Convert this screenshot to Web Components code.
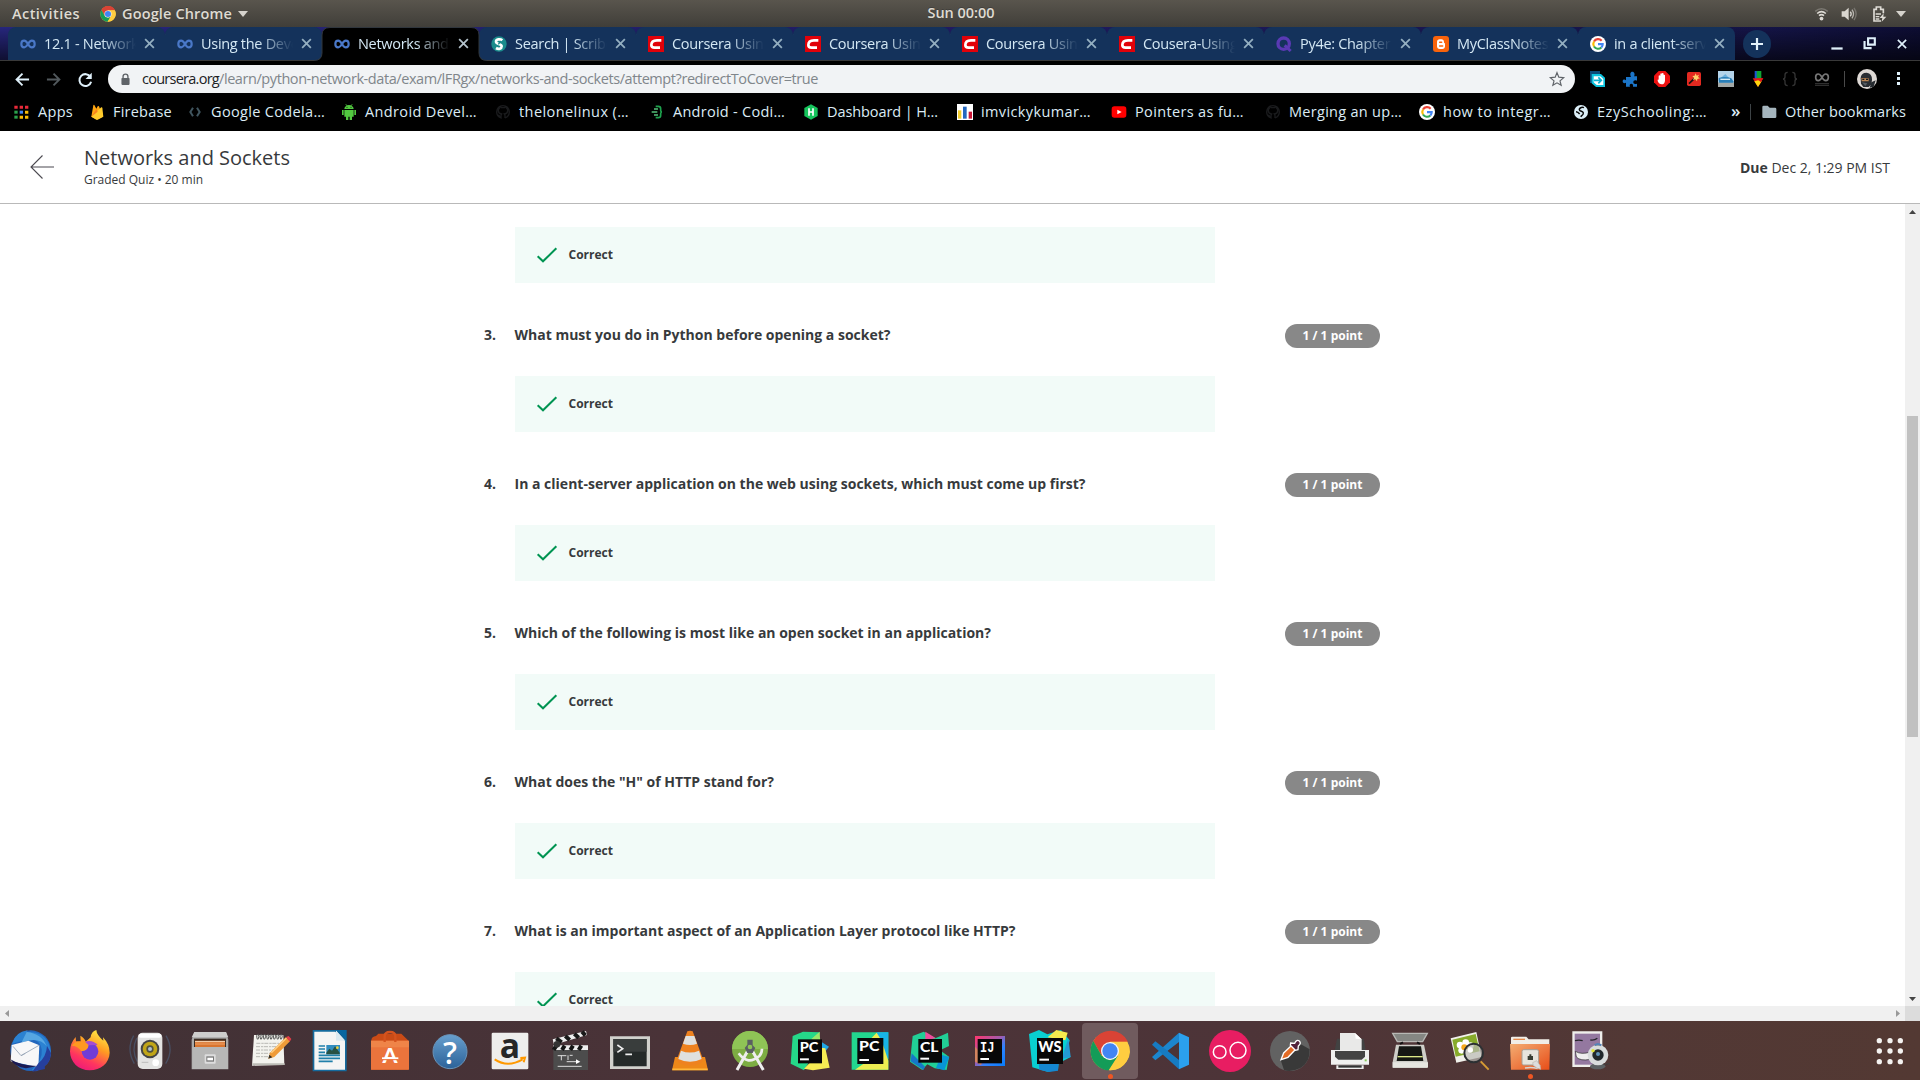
<!DOCTYPE html>
<html lang="en">
<head>
<meta charset="utf-8">
<title>Networks and Sockets</title>
<style>
html,body{margin:0;height:100%;overflow:hidden;background:#fff}
body{font-family:"Open Sans","Noto Sans",sans-serif}
</style>
</head>
<body>
<desk-screen></desk-screen>
<script>
const svg=(vb,body)=>`<svg viewBox="${vb}" xmlns="http://www.w3.org/2000/svg">${body}</svg>`;
const chrome=(s,c,r)=>`<g transform="translate(${c} ${s}) scale(${r/58})"><circle r="58" fill="#fbc93a"/><path d="M-50-29A58 58 0 0 1 54-28L0-28-25-14Z" fill="#d94335"/><path d="M0-28H51A58 58 0 0 0-50-29L-25 14Z" fill="#d94335"/><path d="M-50-30L-25 14 0 28 24 14-4 58A58 58 0 0 1-50-30Z" fill="#149c58"/><path d="M0-28H52A58 58 0 0 1-2 58L25 14Z" fill="#ffcd40"/><circle r="27" fill="#f4f6f8"/><circle r="23" fill="#4285f4"/></g>`;
const G=`<circle cx="24" cy="24" r="24" fill="#fff"/><g fill="none" stroke-width="6.5"><path d="M35 14A14.500 14.500 0 0 0 12 16.500" stroke="#ea4335"/><path d="M12 16.500A14.500 14.500 0 0 0 12 31.500" stroke="#fbbc05"/><path d="M12 31.500A14.500 14.500 0 0 0 34 34.500" stroke="#34a853"/><path d="M34 34.500A14.500 14.500 0 0 0 38 24.500H24" stroke="#4285f4"/></g>`;
const cat=`<path d="M24 5C13 5 5 13 5 24c0 9 5 15 13 18l0-6c-5 1-7-1-8-4M30 42v-7c0-3-1-4-2-5 7-1 10-4 10-10 0-3-1-5-3-7 1-2 0-4 0-5-3 0-5 2-6 3h-10c-2-1-4-3-6-3-1 2-1 4 0 5-2 2-3 4-3 7 0 6 4 9 10 10l-2 4M30 42c8-3 13-9 13-18C43 13 35 5 24 5" fill="none" stroke="#1a1b1d" stroke-width="4"/>`;
const box=(x,y,s,t,fs=38)=>`<rect x="${x}" y="${y}" width="${s}" height="${s}" fill="#080808"/><text x="${x+5}" y="${y+38}" font-family="Lato" font-weight="900" font-size="${fs}" fill="#fff" textLength="${s*.78}" lengthAdjust="spacingAndGlyphs">${t}</text><rect x="${x+6}" y="${y+s-15}" width="${s*.37}" height="6" fill="#fff"/>`;
const D=b=>svg('0 63 180 177',b);
const ICONS={
inf:svg('0 0 48 48','<path d="M24 24C20 17 17 14 12.500 14 7 14 4 18 4 24s3 10 8.500 10c4 0 7-3 11.500-10 4-7 7-10 11.500-10C41 14 44 18 44 24s-3 10-8.500 10C31 34 28 31 24 24" fill="none" stroke="#4a78c8" stroke-width="6.500"/>'),
scribd:svg('0 0 48 48','<circle cx="24" cy="24" r="23" fill="#1b8b8c"/><path d="M34 13C28 8 15 9 15 17c0 8 17 6 17 14 0 7-9 10-17 5" fill="none" stroke="#fff" stroke-width="8"/><path d="M30 15l-8 10" stroke="#1b8b8c" stroke-width="4"/>'),
chegg:svg('0 0 48 48','<path d="M0 0H48V48H0Z" fill="#e10109"/><path d="M40 13H27C16 13 10 19 10 27c0 6 4 8 10 8H36" fill="none" stroke="#fff" stroke-width="8"/>'),
quora:svg('0 0 48 48','<circle cx="23" cy="23" r="17" fill="none" stroke="#5a3ab4" stroke-width="10"/><path d="M26 28L44 45" stroke="#5a3ab4" stroke-width="9"/>'),
blogger:svg('0 0 48 48','<rect width="48" height="48" rx="9" fill="#f9630b"/><path d="M12 18c0-5 3-8 8-8h5c5 0 8 3 8 8 0 3 1 4 3 4v9c0 5-3 8-8 8H20c-5 0-8-3-8-8Z" fill="#fff"/><path d="M20 19h6M20 30h9" stroke="#f9630b" stroke-width="4.500" stroke-linecap="round"/>'),
g:svg('0 0 48 48',G),
apps:svg('0 0 48 48','<path d="M1 5h10v9H1zM17 5h10v9H17zM33 5h10v9H33z" fill="#e92a3a"/><path d="M1 20h10v9H1z" fill="#2ba24c"/><path d="M17 20h10v9H17z" fill="#4285f4"/><path d="M33 20h10v9H33zM17 35h10v9H17zM33 35h10v9H33z" fill="#fbbc05"/><path d="M1 35h10v9H1z" fill="#2ba24c"/>'),
fire:svg('0 0 48 48','<path d="M7 38L13 4q1-3 3-1l6 11 4-7q2-2 4 0L41 38 26 46q-2 1-4 0Z" fill="#ffa611"/><path d="M7 38L31 15l6-5q2-1 3 1l3 27-17 9q-2 1-4 0Z" fill="#ffcb2c"/><path d="M7 38L22 15l4 8Z" fill="#f58220"/>'),
code:svg('0 0 48 48','<path d="M18 11L10 24l8 13M30 11l8 13-8 13" fill="none" stroke="#40555f" stroke-width="6"/>'),
droid:svg('0 0 48 48','<path d="M10 15a14 12 0 0 1 28 0ZM10 18h28v20H10zM3 18h5v15H3zM40 18h5v15h-5zM15 37h7v11h-7zM26 37h7v11h-7z" fill="#52c940"/><path d="M14 0l4 6M34 0l-4 6" stroke="#52c940" stroke-width="2"/><circle cx="18" cy="10" r="1.500"/><circle cx="30" cy="10" r="1.500"/>'),
cat:svg('0 0 48 48',cat),
brace:svg('0 0 48 48','<path d="M20 7h8q7 0 7 7v5q0 5 4 5-4 0-4 5v5q0 7-7 7H20" fill="none" stroke="#1da24d" stroke-width="5"/><path d="M8 24h17M15 15h12M15 33h12" stroke="#54c17a" stroke-width="4"/>'),
hr:svg('0 0 48 48','<path d="M24 1L44 12V36L24 47 4 36V12Z" fill="#15c35b"/><path d="M18 13v22M30 13v22M18 24h12" stroke="#fff" stroke-width="5" fill="none"/>'),
bars:svg('0 0 48 48','<path d="M0 0h48v48H0z" fill="#fff"/><path d="M3 19h10v25H3z" fill="#f3cd2b"/><path d="M18 8h11v36H18z" fill="#2467be"/><path d="M35 23h10v21H35z" fill="#cc1736"/>'),
yt:svg('0 0 48 48','<rect x="2" y="7" width="44" height="34" rx="8" fill="#f00"/><path d="M19 17l13 7-13 7Z" fill="#fff"/>'),
globe:svg('0 0 48 48','<circle cx="24" cy="24" r="21" fill="#dceff8"/><path d="M33 11C25 8 16 14 20 19c3 4 10 2 11 8 1 5-5 8-8 11M9 23c5 0 8 3 11 7" fill="none" stroke="#070707" stroke-width="4.500"/>'),
folder:svg('0 0 48 48','<path d="M4 9q0-4 4-4h12l6 6h16q4 0 4 4v24q0 3-4 3H7q-3 0-3-3Z" fill="#a5b5bd"/>'),
x:svg('0 0 48 48','<path d="M13 13L35 35M35 13L13 35" stroke="currentColor" stroke-width="4.500"/>'),
back:svg('0 0 48 48','<path d="M45 24H6M24 5L5 24l19 19" fill="none" stroke="#dff0fa" stroke-width="6"/>'),
fwd:svg('0 0 48 48','<path d="M3 24h39M24 5l19 19-19 19" fill="none" stroke="#52595d" stroke-width="6"/>'),
reload:svg('0 0 48 48','<path d="M40 16A19 19 0 1 0 42 31" fill="none" stroke="#dff0fa" stroke-width="6.500"/><path d="M44 2v20H24Z" fill="#dff0fa"/>'),
lock:svg('0 0 48 48','<rect x="9" y="18" width="30" height="26" rx="3" fill="#5f6368"/><path d="M15 19v-6a9 9 0 0 1 18 0v6" fill="none" stroke="#5f6368" stroke-width="5"/>'),
star:svg('0 0 48 48','<path d="M24 5l5.500 13.500L44 20 33 29.500 36.500 43 24 35.500 11.500 43 15 29.500 4 20l14.500-1.500Z" fill="none" stroke="#5f6368" stroke-width="3.500"/>'),
e1:svg('0 0 48 48','<path d="M0 0H30V36H0z" fill="#0a4a78"/><path d="M5 9H33L45 20V48H18L5 37Z" fill="#0bc3de"/><path d="M11 16h20l9 8v18H20l-9-8Z" fill="#fff"/><path d="M12 28h20M25 19l9 9-9 9" fill="none" stroke="#0bb2d4" stroke-width="5"/>'),
e2:svg('0 0 48 48','<path d="M18 18h9c-4-9-2-16 4-16s9 8 5 14h9v13c-8-3-11 0-11 5s5 6 11 4v9H33c1-6-1-9-5-9-5 0-6 4-4 9H12V35c-6 3-10 1-10-4s5-7 10-3V18Z" fill="#1b75c8"/>'),
e3:svg('0 0 48 48','<path d="M14 0H34L48 14V34L34 48H14L0 34V14Z" fill="#ed1111"/><path d="M14 25V14q3-3 5 0V8q3-3 5 0V7q3-2 5 1v4q3-2 4 1v16q-1 11-10 11-8 0-12-10-1-5 3-4Z" fill="#fff"/>'),
e4:svg('0 0 48 48','<rect x="3" y="3" width="42" height="42" rx="5" fill="#e32920"/><path d="M9 38L28 20" stroke="#111" stroke-width="5"/><path d="M29 7l3 7 7-3-3 7 6 4-8 2-1 7-5-6-7 2 3-7-5-5 7-1Z" fill="#ffd06a"/>'),
e5:svg('0 0 48 48','<path d="M0 0H48V48H0z" fill="#b4d4ea"/><path d="M0 28L22 9 36 25Z" fill="#6bb0dc"/><path d="M0 34H48V48H0z" fill="#a4a9a7"/><path d="M2 21q20-7 38 1l6 9v4H3z" fill="#2a7fb8"/><path d="M7 25h29" stroke="#d8edf7" stroke-width="4"/>'),
e6:svg('0 0 48 48','<path d="M14 0h10v24H14z" fill="#1c52d8"/><path d="M20 0h14v24H20z" fill="#10a533"/><path d="M8 22h32L24 48Z" fill="#e31819"/><path d="M24 28L35 31 24 48 13 31Z" fill="#ffd50d"/><path d="M24 22h16l-9 12Z" fill="#e31819"/>'),
e7:svg('0 0 48 48','<path d="M17 4q-8 0-8 7v6q0 7-6 7 6 0 6 7v6q0 7 8 7M31 4q8 0 8 7v6q0 7 6 7-6 0-6 7v6q0 7-8 7" fill="none" stroke="#343434" stroke-width="4"/>'),
e8:svg('0 0 48 48','<path d="M24 19C20 12 17 9 12.500 9 8 9 5 13 5 19s3 10 8 10c4 0 7-3 11-10 4-7 7-10 11-10 5 0 8 4 8 10s-3 10-8 10C31 29 28 26 24 19" fill="none" stroke="#777" stroke-width="5"/><path d="M3 38h42M3 43h42" stroke="#555" stroke-width="2"/>'),
ninja:svg('0 0 60 60','<circle cx="30" cy="30" r="30" fill="#ded9d5"/><path d="M11 28Q11 11 29 11q17 2 16 22l-2 13L35 54H19L12 44Z" fill="#292d32"/><path d="M13 27l22 1v9H14Z" fill="#bc8552"/><path d="M16 31h6M27 31h6" stroke="#16191c" stroke-width="4"/><path d="M15 40l16 3-6 8Z" fill="#555c63"/><path d="M43 40l13-6-6 19-12 3Z" fill="#252a2f"/>'),
chromeS:svg('0 0 48 48',chrome(24,24,23)),
wifi:svg('0 0 48 48','<g fill="none" stroke-width="5"><path d="M4 17q20-16 40 0" stroke="#7b7871"/><path d="M10 24q14-12 28 0M16 31q8-7 16 0" stroke="#dedbd5"/></g><circle cx="24" cy="40" r="6" fill="#dedbd5"/>'),
vol:svg('0 0 48 48','<path d="M2 16h9L23 5v38L11 32H2Z" fill="#d9d6d0"/><path d="M28 17q5 7 0 14" fill="none" stroke="#d9d6d0" stroke-width="4"/><path d="M33 11q9 13 0 26" fill="none" stroke="#b5b2ac" stroke-width="4"/><path d="M39 6q13 18 0 36" fill="none" stroke="#77746e" stroke-width="4"/>'),
bat:svg('0 0 48 48','<path d="M30 45H9V10h7V3h13v7h8v12" fill="none" stroke="#dedbd5" stroke-width="5"/><path d="M14 24h16M14 32h11M14 39h11" stroke="#dedbd5" stroke-width="4"/><path d="M38 22L26 36h8l-2 11 14-15h-9Z" fill="#dedbd5"/>'),
min:svg('0 0 48 48','<path d="M9 36H39" stroke="#dff0fa" stroke-width="6"/>'),
max:svg('0 0 48 48','<path d="M20 9h19v18H20z" fill="none" stroke="#dff0fa" stroke-width="6"/><path d="M26 15h7v6h-7z" fill="#0b0b30"/><path d="M10 17v20h20" fill="none" stroke="#dff0fa" stroke-width="6"/>'),
arrow:svg('0 0 24 24','<path d="M24 12H1M12.500 .5L1 12 12.500 23.500" fill="none" stroke="#4b4950" stroke-width="1.100"/>'),
check:svg('0 0 60 48','<path d="M2 28L18 43 58 4" fill="none" stroke="#009452" stroke-width="6"/>'),
grid:D('<g fill="#f5f3f1">'+[58,90,121].map(x=>[122,153,185].map(y=>`<circle cx="${x}" cy="${y}" r="8"/>`).join('')).join('')+'</g>'),
tb:D('<circle cx="92" cy="152" r="61" fill="#2166bd"/><path d="M37 131Q45 96 83 91L80 96q58-3 70 47 12 48-42 71l-13-4q34-27 30-62-6-43-62-24Z" fill="#2b82d2"/><path d="M80 96q45 4 60 43-24-32-76-11Z" fill="#56a6e2"/><path d="M35 135l50-13 33 14-3 66L32 184Z" fill="#f7f7f8"/><path d="M39 139l24 28 54-31M63 167l13-7" fill="none" stroke="#94a2b4" stroke-width="2.500"/><path d="M31 178q32 20 82 20l-35 7Q45 201 31 178Z" fill="#1b1a52"/><path d="M115 190q24-19 26-52l12 21q-2 31-19 39l1 9-38 8Z" fill="#263f9d"/>'),
ff:D('<linearGradient id="f" x1=".8" y1="0" x2=".3" y2="1"><stop stop-color="#fff34a"/><stop offset=".4" stop-color="#ff9b22"/><stop offset=".75" stop-color="#ff355f"/><stop offset="1" stop-color="#ed1a7a"/></linearGradient><path d="M92 112Q94 94 109 90q1 15 21 32l-1-10q20 21 20 46c-1 31-27 53-60 53s-59-24-59-57q0-24 17-43l1 13 14 1-1-18q13 7 16 18Z" fill="url(#f)"/><circle cx="90" cy="154" r="25" fill="#703cd6"/><path d="M35 137q14-19 37-11 15-7 34 8l-20 1q-2 17-22 19-10-17-29-17Z" fill="#ff9920"/><path d="M75 125q22-7 38 10l-27 1Z" fill="#a34dd0"/>'),
spk:D('<g fill="none" stroke="#4b5d79" stroke-width="4" opacity=".65"><path d="M41 107Q18 148 43 191M138 107q25 43-1 84M50 115q-17 35 2 70"/></g><rect x="53" y="98" width="74" height="109" rx="15" fill="#e3e3e2"/><rect x="56" y="101" width="68" height="12" rx="6" fill="#fff"/><circle cx="90" cy="147" r="28" fill="#454545"/><circle cx="90" cy="147" r="22" fill="#c0a517"/><circle cx="90" cy="147" r="11" fill="#4f513f"/><circle cx="90" cy="147" r="6" fill="#aec0d1"/><circle cx="107" cy="188" r="10" fill="#fff"/><path d="M65 187h20" stroke="#bbb" stroke-width="3"/>'),
files:D('<path d="M43 96H138L145 119V208H35V119Z" fill="#a9a9a8"/><path d="M43 96h95l7 16H35Z" fill="#cececd"/><path d="M42 116h96v27H42z" fill="#3b2d24"/><path d="M45 122h90v22H45z" fill="#d9742e"/><path d="M45 125h90" stroke="#f6ddbf" stroke-width="3"/><path d="M45 132h90" stroke="#f0a368" stroke-width="3"/><path d="M37 141h107v66H37z" fill="#b7b7b6"/><rect x="74" y="163" width="33" height="28" rx="3" fill="#ddd"/><path d="M79 169h23v16H79z" fill="#777"/><path d="M82 173h17v8H82z" fill="#fff"/>'),
edit:D('<path d="M42 105H130L133 195 36 197Z" fill="#f3f3ee"/><path d="M37 190h97v5H37z" fill="#bdbdb6"/><g stroke="#555" stroke-width="3">'+[52,62,72,82,92,102,112,122].map(x=>`<path d="M${x} 118q-5-15 3-15 4 6-1 15" fill="none"/>`).join('')+'</g><g stroke="#9c9c97" stroke-width="2" stroke-dasharray="12 3 7 2"><path d="M49 130h68M48 140h60M48 150h52M48 160h45M48 170h40"/></g><path d="M85 176l5-18 48-47 12 13-47 47Z" fill="#ef9b38"/><path d="M138 111l8-3 8 9-5 8Z" fill="#e43d49"/><path d="M85 176l3-12 9 8Z" fill="#343029"/><path d="M94 158l45-43" stroke="#ffcf83" stroke-width="4"/>'),
doc:D('<path d="M38 90h70l32 32v92H38Z" fill="#156b9e"/><path d="M43 95h63l29 29v85H43Z" fill="#f5f5f4"/><path d="M108 90v32h28" fill="#dceaf1"/><path d="M107 90h33v33Z" fill="#0766a0"/><g stroke="#2180aa" stroke-width="5"><path d="M56 138h19M56 147h19M56 157h19M56 166h64M56 175h64M56 184h42"/></g><path d="M79 135h41v28H79z" fill="#328dbf"/><path d="M79 158l9-12 8 6 9-13 14 19v5H79Z" fill="#285144"/><circle cx="112" cy="143" r="4" fill="#efd33a"/>'),
shop:D('<path d="M34 121q1-12 14-13l7-7h69l20 20v88H34Z" fill="#ca4b16"/><path d="M33 122h114v87H33z" fill="#eb743c"/><path d="M33 122h114v20H33z" fill="#ef8448"/><path d="M74 126V109q0-13 16-13t16 13v17" fill="none" stroke="#d5531e" stroke-width="7"/><text x="90" y="190" text-anchor="middle" font-family="Lato" font-weight="900" font-size="64" fill="#fff">A</text><path d="M66 175h49" stroke="#fff" stroke-width="6"/><path d="M66 179h49" stroke="#eb743c" stroke-width="3"/>'),
help:D('<linearGradient id="h" x2="0" y2="1"><stop stop-color="#679fcd"/><stop offset="1" stop-color="#2c6299"/></linearGradient><circle cx="90" cy="155" r="51" fill="url(#h)" stroke="#6993b8" stroke-width="3"/><text x="90" y="191" text-anchor="middle" font-family="Open Sans" font-weight="600" font-size="92" fill="#fff">?</text>'),
amz:D('<rect x="35" y="98" width="110" height="110" rx="4" fill="#eeeeed"/><text x="90" y="174" text-anchor="middle" font-family="Open Sans" font-weight="bold" font-size="101" fill="#272727">a</text><path d="M44 178Q83 204 128 178M121 174l14-1-4 14" fill="none" stroke="#ff9900" stroke-width="6"/>'),
clap:D('<path d="M40 138h104v72H40z" fill="#4c4c4c"/><path d="M38 118l100-25 3 12L42 134Z" fill="#eee"/><path d="M49 115l16 12M76 108l13 12M103 101l13 12M126 95l10 11" stroke="#191919" stroke-width="12"/><path d="M40 136h104v14H40z" fill="#eee"/><path d="M49 137l-8 13M74 137l-8 13M99 137l-8 13M124 137l-8 13" stroke="#151515" stroke-width="12"/><circle cx="51" cy="133" r="10" fill="#333"/><path d="M53 167h26M64 167v14M84 166v14M89 166h9M80 185h31M53 199h72" stroke="#ddd" stroke-width="3"/><path d="M108 178l13 7-13 7Z" fill="#fff"/>'),
term:D('<path d="M30 109h120v98H30z" fill="#d1d1cc"/><path d="M40 117h100v82H40z" fill="#252a29"/><path d="M40 117h100v38H40z" fill="#393d3c"/><path d="M52 135l16 11-16 11M76 163h20" fill="none" stroke="#eee" stroke-width="5"/>'),
vlc:D('<path d="M45 171h90l9 40H36Z" fill="#ed8819"/><path d="M82 94q8-4 16 0l32 86q-8 17-40 17t-40-17Z" fill="#ee821f"/><path d="M77 108h26l8 23q-20 8-42 0ZM63 152q27 11 54 0l8 25q-35 17-70 0Z" fill="#dfe0de"/><path d="M37 208h106" stroke="#ffb83b" stroke-width="5"/>'),
as:D('<circle cx="90" cy="147" r="54" fill="#7dad43"/><path d="M36 147a54 54 0 0 1 108 0Z" fill="#8fc456"/><path d="M88 144L51 210M92 144l38 66" stroke="#eee" stroke-width="9"/><path d="M56 160q27 38 62 8 8-8 8-22" fill="none" stroke="#eee" stroke-width="8"/><path d="M82 119h16v17l8 8-8 15H82l-8-15 8-10Z" fill="#5a6062"/><circle cx="90" cy="141" r="7" fill="#8fc456"/>'),
pc1:D('<path d="M38 108l31-13 50 2-10 54-37 60-40-20Z" fill="#25d889"/><path d="M119 95l2 38-27-16Z" fill="#9ce769"/><path d="M120 123l27 17-20 25Z" fill="#20a7e5"/><path d="M123 143l13 2 13 58-50 8-27-5 20-20Z" fill="#f7ed53"/>'+box(54,118,72,'PC')),
pc2:D('<path d="M35 97h110v112H35Z" fill="#22d78f"/><path d="M110 97h35v80l-25-24Z" fill="#18b4e6"/><path d="M91 118l19-20 15 24 20 60v27H45l34-24Z" fill="#eeee51"/>'+box(52,114,78,'PC',41)),
cl:D('<path d="M38 108l33-13 35 20 38-17 3 40-27 13 27 19-7 40-36-5-22-12-15 17-37-25Z" fill="#21cf96"/><path d="M76 95l31 19-31 8Z" fill="#ef4c9c"/><path d="M35 160l40 40-4 10-39-26Z" fill="#1677c8"/><path d="M124 164l24 7-15 40-25-7Z" fill="#0795d5"/>'+box(55,117,71,'CL')),
ij:D('<linearGradient id="i" x2="1" y2="1"><stop stop-color="#ff356c"/><stop offset=".45" stop-color="#a05cae"/><stop offset=".65" stop-color="#2f83ff"/><stop offset="1" stop-color="#087cfa"/></linearGradient><path d="M45 108h90v90H45Z" fill="url(#i)"/><path d="M45 140l28 30-10 25-18-10Z" fill="#d3845f"/><rect x="53" y="117" width="73" height="73" fill="#080808"/><text x="60" y="157" font-family="Liberation Mono" font-weight="bold" font-size="46" fill="#fff" textLength="43" lengthAdjust="spacingAndGlyphs">IJ</text><path d="M61 174h26v6H61z" fill="#fff"/>'),
ws:D('<path d="M27 102l30-12 25 13 41-13 26 31-8 31 11 19-36 19-2 20-32 5-45-13Z" fill="#09cfd1"/><path d="M83 112l26-22 34 8-7 23Z" fill="#f5ec4e"/><path d="M145 115l7 56-27 6Z" fill="#239ad4"/><path d="M56 184h60l-2 28-27 4-29-7Z" fill="#1588d1"/><rect x="51" y="114" width="78" height="78" fill="#080808"/><text x="55" y="156" font-family="Lato" font-weight="900" font-size="44" fill="#fff" textLength="70" lengthAdjust="spacingAndGlyphs">WS</text><path d="M58 176h29v6H58z" fill="#fff"/>'),
chrome:D(chrome(153,90,58)),
vs:D('<path d="M117 98L36 171l10 10 71-55Z" fill="#1c86ce"/><path d="M46 124L36 134l81 74V179Z" fill="#167bc2"/><path d="M117 98l30 14v82l-30 14Z" fill="#2ba0ed"/><path d="M117 128l-33 25 33 26Z" fill="#4b3538"/>'),
oo:D('<circle cx="90" cy="153" r="63" fill="#e81d62"/><circle cx="59" cy="156" r="19" fill="none" stroke="#fff" stroke-width="4.500"/><circle cx="114" cy="151" r="24" fill="none" stroke="#fff" stroke-width="4.500"/>'),
pick:D('<circle cx="90" cy="153" r="60" fill="#626262"/><path d="M62 180l10 30q20 8 49-6 30-17 28-56l-32-18Z" fill="#393939"/><path d="M63 179l8-20 27-26 12 12-26 27Z" fill="#e36b25" stroke="#fff" stroke-width="4"/><path d="M92 129l12 1q6-13 14-7 7 7-3 15l-1 11-8 2-15-15Z" fill="#52233b" stroke="#fff" stroke-width="4"/>'),
print:D('<path d="M51 116h80l7 40H43Z" fill="#424242"/><path d="M60 99h45l20 19v38H60Z" fill="#e9e9e8"/><path d="M105 99l2 17 18 2Z" fill="#fff"/><path d="M33 150h114v44H33z" fill="#f0f0ef"/><path d="M45 153h90v17l-10 9H55l-10-9Z" fill="#444"/><path d="M49 196h82v11H49z" fill="#eee"/><path d="M55 196h70v7H55z" fill="#333"/><path d="M134 181h6" stroke="#85cb57" stroke-width="6"/>'),
scan:D('<path d="M38 100h104l-14 25H52Z" fill="#858783" stroke="#b7b8b4" stroke-width="4"/><path d="M48 134h84l11 53v17H38v-17Z" fill="#cfcfc9"/><path d="M57 139h66l7 44H50Z" fill="#151814"/><path d="M53 170h75" stroke="#dce987" stroke-width="4"/><path d="M38 187h106v15H38z" fill="#e6e6e0"/><path d="M60 132l9-5M120 132l-9-5" stroke="#111" stroke-width="6"/>'),
imgv:D('<path d="M32 115l77-19 16 75-76 17Z" fill="#f1f1eb"/><path d="M37 119l70-17 12 52-72 16Z" fill="#87ab2a"/><g fill="#fff"><circle cx="60" cy="135" r="10"/><circle cx="77" cy="128" r="10"/><circle cx="91" cy="137" r="10"/><circle cx="65" cy="151" r="10"/><circle cx="80" cy="157" r="10"/></g><circle cx="73" cy="142" r="9" fill="#f5a91d"/><circle cx="101" cy="159" r="28" fill="#b9b9b3" opacity=".7"/><circle cx="101" cy="159" r="28" fill="none" stroke="#2c3033" stroke-width="6"/><path d="M122 184l24 25" stroke="#d69b34" stroke-width="6"/><circle cx="91" cy="150" r="8" fill="#fff"/>'),
fold:D('<path d="M33 113q0-3 4-3h42l7 8h62v20H33Z" fill="#f1eee8"/><path d="M40 118h35" stroke="#e68a4b" stroke-width="4"/><linearGradient id="q" x2="1" y2="1"><stop stop-color="#f3ad72"/><stop offset="1" stop-color="#e84d18"/></linearGradient><path d="M30 132h120l-2 77H33Z" fill="url(#q)"/><rect x="66" y="149" width="50" height="46" rx="5" fill="#e7e4dd" stroke="#a69f96" stroke-width="3"/><path d="M83 178v-10h5v-5h6v5h5v12H83Z" fill="#393d33"/><path d="M75 204q20-4 38 2" fill="none" stroke="#d6d4d0" stroke-width="4"/><path d="M98 188l12-6 10 14 2 12-12-4-10-8Z" fill="#ddd" stroke="#bbb5ae" stroke-width="2"/>'),
cheese:D('<path d="M37 94h90v107H37z" fill="#efeeeb"/><path d="M44 101h76v93H44z" fill="#9478a0"/><path d="M45 122q12-3 23 0M91 120q12 2 21-5" fill="none" stroke="#26252b" stroke-width="4"/><path d="M46 154q18 11 45 2v22q-30 6-42-7Z" fill="#eee" stroke="#222" stroke-width="2"/><ellipse cx="113" cy="199" rx="23" ry="9" fill="#5c6264"/><circle cx="114" cy="165" r="31" fill="#d8dcdc"/><circle cx="114" cy="165" r="17" fill="#20272b"/><circle cx="114" cy="162" r="6" fill="#5e91b7"/><path d="M104 136q9-8 20 0" stroke="#5683b7" stroke-width="6"/><circle cx="99" cy="152" r="5" fill="#dfe337"/><path d="M131 193q9 0 18-2" stroke="#444" stroke-width="3"/>')
};
const def=(name,html,after)=>customElements.define(name,class extends HTMLElement{
  constructor(){super();this.attachShadow({mode:'open'})}
  connectedCallback(){this.shadowRoot.innerHTML=typeof html==='function'?html(this):html;if(after)after(this)}
});
/* Keeps a label at a fixed advance width by spreading the difference over its letters. */
def('fit-text','<style>:host{display:inline-block;white-space:pre}</style><slot></slot>',el=>{
  const w=+el.getAttribute('w');if(!w)return;
  const n=el.textContent.length;
  el.style.letterSpacing=((w-el.getBoundingClientRect().width)/n)+'px';
});
def('ui-icon',e=>`<style>:host{display:block;flex:none;width:var(--w,16px);height:var(--h,16px)}svg{display:block;width:100%;height:100%;overflow:visible}</style>${ICONS[e.getAttribute('name')]}`);
def('system-bar',`<style>:host{display:grid;grid-template-columns:1fr auto 1fr;align-items:center;height:27px;padding:0 14px 0 12px;background:linear-gradient(#59554d,#403e39);color:#dfdbd2;font:600 14.500px "Open Sans";text-shadow:0 -1px #3339}
.l,.r{display:flex;align-items:center}.r{justify-content:flex-end}.t{width:0;height:0;border:5px solid transparent;border-top:6px solid #d6d3cd;border-bottom:0}</style>
<div class="l"><fit-text w="68">Activities</fit-text><ui-icon name="chromeS" style="margin:0 6px 0 20px"></ui-icon><fit-text w="110">Google Chrome</fit-text><i class="t" style="margin-left:6px"></i></div>
<fit-text w="67" style="position:relative;top:-1px;left:2px">Sun 00:00</fit-text>
<div class="r"><ui-icon name="wifi" style="--w:15px;--h:15px"></ui-icon><ui-icon name="vol" style="margin-left:12px"></ui-icon><ui-icon name="bat" style="margin-left:14px;margin-right:-1px"></ui-icon><i class="t" style="margin-left:10px"></i></div>`);
def('browser-tab',e=>`<style>:host{display:flex;align-items:center;box-sizing:border-box;width:157px;height:33px;padding:0 6px 0 12px;background:#14325b;color:#d4e8f4;border-radius:8px 8px 0 0;position:relative;font:14.500px "Open Sans"}
:host([active]){background:none;z-index:2}.bg{position:absolute;left:0;top:0;width:157px;height:34px;overflow:visible}
ui-icon{position:relative}.title{position:relative;width:94px;margin-left:8px;margin-right:4px;overflow:hidden;white-space:nowrap;letter-spacing:-.3px;-webkit-mask:linear-gradient(90deg,#000 62%,transparent 100%)}
.x{color:#94afc1}:host([active]) .x{color:#b4c3cc}:host([sep])::after{content:"";position:absolute;right:-1px;top:7px;width:1px;height:20px;background:#50677f}</style>
${e.hasAttribute('active')?'<svg class="bg" viewBox="0 0 157 34"><path d="M-8 33.500Q0 33.500 0 26V8Q0 .5 8 .5H149Q157 .5 157 8V26Q157 33.500 165 33.500V35H-8Z" fill="#000"/><path d="M-8 33.500Q0 33.500 0 26V8Q0 .5 8 .5H149Q157 .5 157 8V26Q157 33.500 165 33.500" fill="none" stroke="#30363d"/></svg>':''}
<ui-icon name="${e.getAttribute('icon')}"></ui-icon><div class="title"><slot></slot></div><ui-icon class="x" name="x" style="--w:19px;--h:19px"></ui-icon>`);
def('tab-strip',`<style>:host{display:flex;height:33px;padding-left:8px;border-bottom:1px solid #393939;background:linear-gradient(180deg,transparent,#0009),linear-gradient(90deg,#26267c,#201b62 50%,#141446 92%,#0d0d32)}
.plus{width:28px;height:28px;border-radius:50%;background:#14325b;margin:3px 0 0 8px;display:grid;place-items:center}.plus svg{width:14px}.win{margin-left:auto;display:flex;align-items:center;gap:15px;padding-right:9px;color:#dff0fa}</style>
<browser-tab icon="inf" sep>12.1 - Networks</browser-tab><browser-tab icon="inf">Using the Devel</browser-tab><browser-tab icon="inf" active>Networks and S</browser-tab><browser-tab icon="scribd" sep>Search | Scribd</browser-tab><browser-tab icon="chegg" sep>Coursera Using</browser-tab><browser-tab icon="chegg" sep>Coursera Using</browser-tab><browser-tab icon="chegg" sep>Coursera Using</browser-tab><browser-tab icon="chegg" sep>Cousera-Using</browser-tab><browser-tab icon="quora" sep>Py4e: Chapter</browser-tab><browser-tab icon="blogger" sep>MyClassNotes</browser-tab><browser-tab icon="g">in a client-serv</browser-tab>
<div class="plus"><svg viewBox="0 0 14 14"><path d="M7 1v12M1 7h12" stroke="#e4f3fb" stroke-width="2.200"/></svg></div>
<div class="win"><ui-icon name="min" style="--w:18px;--h:18px"></ui-icon><ui-icon name="max" style="--w:17px;--h:17px"></ui-icon><ui-icon name="x" style="--w:18px;--h:18px"></ui-icon></div>`);
def('tool-bar',`<style>:host{display:flex;align-items:center;height:36px;padding:0 15px;background:#000;box-sizing:border-box}
.omni{display:flex;align-items:center;box-sizing:border-box;width:1467px;height:28px;margin-left:15px;border-radius:14px;background:#f1f3f5;padding:0 10px 0 11px;font:14.500px "Open Sans";color:#80868b}.omni fit-text{margin-top:-2px}.ext{display:flex;align-items:center;gap:16px;margin-left:15px}</style>
<ui-icon name="back" style="--w:15px;--h:15px"></ui-icon><ui-icon name="fwd" style="--w:15px;--h:15px;margin-left:16px"></ui-icon><ui-icon name="reload" style="--w:15px;--h:15px;margin-left:17px"></ui-icon>
<div class="omni"><ui-icon name="lock" style="--w:13px;--h:13px"></ui-icon><fit-text w="77" style="margin-left:10px;color:#202124">coursera.org</fit-text><fit-text w="599">/learn/python-network-data/exam/lFRgx/networks-and-sockets/attempt?redirectToCover=true</fit-text><ui-icon name="star" style="margin-left:auto"></ui-icon></div>
<div class="ext">${[1,2,3,4,5,6,7,8].map(i=>`<ui-icon name="e${i}"></ui-icon>`).join('')}</div>
<i style="width:1px;height:16px;background:#4a4a4a;margin:0 12px 0 14px"></i><ui-icon name="ninja" style="--w:20px;--h:20px"></ui-icon>
<svg width="4" height="14" style="margin-left:20px"><path d="M0 0h3v3H0zM0 5h3v3H0zM0 10h3v3H0z" fill="#dff0fa"/></svg>`);
def('book-mark',e=>`<style>:host{display:flex;align-items:center;gap:8px;width:154px;flex:none;color:#dcecf5;font:14.500px "Open Sans"}fit-text{margin-top:-1px}</style><ui-icon name="${e.getAttribute('icon')}"></ui-icon><fit-text w="${e.getAttribute('w')}">${e.getAttribute('label')}</fit-text>`);
const marks=[['apps','Apps',35],['fire','Firebase',59],['code','Google Codela…',114],['droid','Android Devel…',112],['cat','thelonelinux (…',110],['brace','Android - Codi…',112],['hr','Dashboard | H…',111],['bars','imvickykumar…',110],['yt','Pointers as fu…',109],['cat','Merging an up…',113],['g','how to integr…',108],['globe','EzySchooling:…',110]];
def('bookmark-bar',`<style>:host{display:flex;align-items:center;box-sizing:border-box;height:34px;background:#000;padding:0 0 4px 14px}book-mark:nth-of-type(1){width:75px}book-mark:nth-of-type(2){width:98px}.m{color:#dcecf5;font:600 17px "Open Sans";margin-left:4px;width:19px;line-height:20px;height:22px}i{width:1px;height:16px;background:#3d4346}</style>
${marks.map(m=>`<book-mark icon="${m[0]}" label="${m[1]}" w="${m[2]}"></book-mark>`).join('')}<span class="m">»</span><i></i><book-mark icon="folder" label="Other bookmarks" w="121" style="margin-left:10px"></book-mark>`);
def('quiz-header',`<style>:host{display:flex;align-items:center;height:73px;box-sizing:border-box;padding:0 30px 0 30px;border-bottom:1px solid #b9b9b9;color:#373a3c;font:14px "Open Sans";background:#fff}.t{margin-left:30px;margin-top:-2px}.h{font-size:20px;line-height:26px;display:block}.s{font-size:12px;line-height:17px;display:block}.d{margin-left:auto}b{font-weight:700}</style>
<ui-icon name="arrow" style="--w:24px;--h:24px"></ui-icon><div class="t"><div class="h"><fit-text w="206">Networks and Sockets</fit-text></div><div class="s"><fit-text w="119">Graded Quiz • 20 min</fit-text></div></div><div class="d"><fit-text w="150"><b>Due</b> Dec 2, 1:29 PM IST</fit-text></div>`);
def('answer-result','<style>:host{display:flex;align-items:center;box-sizing:border-box;height:56px;width:700px;margin-left:515px;padding-left:22px;background:#f2fbf8;color:#373a3c;font:700 12px "Open Sans"}fit-text{margin-top:-2px}</style><ui-icon name="check" style="--w:20px;--h:16px;margin-right:11.500px"></ui-icon><fit-text w="45"><slot></slot></fit-text>');
def('quiz-question',e=>`<style>:host{display:block}.q{display:flex;align-items:center;height:22px;padding:40px 0 31px 484px;color:#373a3c;font:700 14px "Open Sans"}.n{width:30.500px;flex:none}.t{width:770.500px}.p{box-sizing:border-box;width:95px;height:24px;border-radius:12px;background:#888;color:#fff;font-size:12px;line-height:23px;text-align:center;margin-top:4px}</style>
<div class="q"><span class="n">${e.getAttribute('n')}.</span><span class="t"><fit-text w="${e.getAttribute('w')}">${e.textContent.replace(/</g,'&lt;')}</fit-text></span><span class="p"><fit-text w="60">1 / 1 point</fit-text></span></div><answer-result>Correct</answer-result>`);
def('scroll-bars',e=>{const v=e.getAttribute('dir')==='v';return `<style>:host{display:flex;box-sizing:border-box;justify-content:space-between;background:#f0f0f0;${v?'flex-direction:column;align-items:center;width:15px;height:802px;padding:6px 0 5px':'align-items:center;height:15px;padding:0 5px;width:1905px'}}svg{display:block}.th{width:11px;height:321px;background:#c1c1c1;margin-top:-59px}</style>${v?'<svg width="7" height="4"><path d="M0 4L3.500 0 7 4Z" fill="#444"/></svg><div class="th"></div><svg width="7" height="4"><path d="M0 0L3.500 4 7 0Z" fill="#444"/></svg>':'<svg width="4" height="7"><path d="M4 0L0 3.500 4 7Z" fill="#999"/></svg><svg width="4" height="7"><path d="M0 0L4 3.500 0 7Z" fill="#999"/></svg>'}`});
def('quiz-page',`<style>:host{display:grid;grid-template:802px 15px/1905px 15px;height:817px}.c{overflow:hidden;padding-top:23px;box-sizing:border-box}.corner{background:#dcdcdc}</style>
<div class="c"><answer-result>Correct</answer-result>
<quiz-question n="3" w="376">What must you do in Python before opening a socket?</quiz-question>
<quiz-question n="4" w="571">In a client-server application on the web using sockets, which must come up first?</quiz-question>
<quiz-question n="5" w="476.500">Which of the following is most like an open socket in an application?</quiz-question>
<quiz-question n="6" w="259.500">What does the "H" of HTTP stand for?</quiz-question>
<quiz-question n="7" w="501">What is an important aspect of an Application Layer protocol like HTTP?</quiz-question></div>
<scroll-bars dir="v"></scroll-bars><scroll-bars dir="h"></scroll-bars><div class="corner"></div>`);
def('dock-item',e=>`<style>:host{display:grid;width:60px;height:59px;position:relative}:host([active])::before{content:"";position:absolute;left:2px;top:2px;width:56px;height:56px;border-radius:4px;background:#705b5e}:host([running])::after{content:"";position:absolute;left:27.500px;top:53px;width:5px;height:5px;border-radius:50%;background:#ee5623}ui-icon{position:relative}</style><ui-icon name="${e.getAttribute('icon')}" style="--w:60px;--h:59px"></ui-icon>`);
def('app-dock',`<style>:host{display:flex;height:59px;background:linear-gradient(90deg,#403135,#4a3338 35%,#4d3438 65%,#523835 85%,#533933)}.end{margin-left:auto}</style>
${'tb ff spk files edit doc shop help amz clap term vlc as pc1 pc2 cl ij ws chrome vs oo pick print scan imgv fold cheese'.split(' ').map(n=>`<dock-item icon="${n}"${n==='chrome'?' active running':n==='fold'?' running':''}></dock-item>`).join('')}<dock-item class="end" icon="grid"></dock-item>`);
def('desk-screen',`<style>:host{display:flex;flex-direction:column;width:1920px;height:1080px;overflow:hidden}:host>*{flex:none}</style><system-bar></system-bar><tab-strip></tab-strip><tool-bar></tool-bar><bookmark-bar></bookmark-bar><quiz-header></quiz-header><quiz-page></quiz-page><app-dock></app-dock>`);
</script>
</body>
</html>
